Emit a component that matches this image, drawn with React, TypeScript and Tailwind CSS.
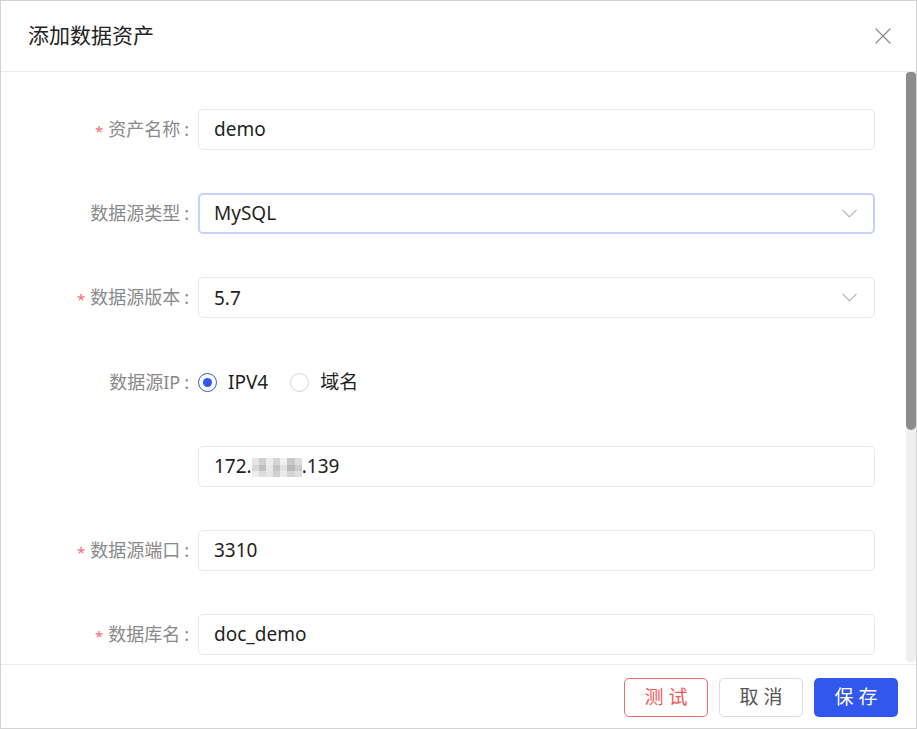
import { ChevronDown, X } from "lucide-react";

const font = "font-['Noto_Sans','Noto_Sans_CJK_SC',sans-serif]";

const mosaic = [
  "bg-[#e4e4e4]", "bg-[#cfcfcf]", "bg-[#ececec]", "bg-[#d6d6d6]", "bg-[#f0f0f0]", "bg-[#c9c9c9]", "bg-[#dedede]",
  "bg-[#d9d9d9]", "bg-[#bfbfbf]", "bg-[#e8e8e8]", "bg-[#c4c4c4]", "bg-[#e2e2e2]", "bg-[#b9b9b9]", "bg-[#cccccc]",
  "bg-[#eeeeee]", "bg-[#dcdcdc]", "bg-[#e6e6e6]", "bg-[#d0d0d0]", "bg-[#ebebeb]", "bg-[#d4d4d4]", "bg-[#e0e0e0]",
];

function Label({ text, required }: { text: string; required?: boolean }) {
  return (
    <div className="w-[189px] shrink-0 flex items-center justify-end text-[18px] text-[#8a8a8a]">
      {required && <span className="text-[#f56c6c] text-[15px] mr-[5px] mt-[3px]">*</span>}
      <span>{text}</span>
      <span className="ml-[4px] mr-[1px]">:</span>
    </div>
  );
}

function Input({ children, focused, select }: { children: React.ReactNode; focused?: boolean; select?: boolean }) {
  return (
    <div
      className={
        "flex-1 h-[41px] ml-[8px] rounded-[5px] flex items-center justify-between text-[19px] text-[#1f1f1f] bg-white " +
        (focused ? "border-2 border-[#c8d1f8] pl-[14px] pr-[10px]" : "border border-[#e6e8f0] pl-[15px] pr-[11px]")
      }
    >
      <div className="flex items-center">{children}</div>
      {select && <ChevronDown size={27} strokeWidth={1} className="text-[#b0b0b0]" />}
    </div>
  );
}

function Radio({ label, checked }: { label: string; checked?: boolean }) {
  return (
    <div className="flex items-center gap-[11px]">
      <span
        className={
          "w-[19px] h-[19px] rounded-full flex items-center justify-center bg-white " +
          (checked ? "border-[1.5px] border-[#3556ee]" : "border border-[#d6d6d6]")
        }
      >
        {checked && <span className="w-[9px] h-[9px] rounded-full bg-[#3556ee]" />}
      </span>
      <span className="text-[19px] text-[#1f1f1f]">{label}</span>
    </div>
  );
}

export default function App() {
  return (
    <div className={`w-[917px] h-[729px] bg-white border border-[#d2d2d2] flex flex-col ${font}`}>
      {/* header */}
      <div className="h-[71px] shrink-0 border-b border-[#e9e9e9] flex items-center justify-between pl-[27px] pr-[19px]">
        <span className="text-[21px] text-[#222]">添加数据资产</span>
        <X size={28} strokeWidth={1.1} className="text-[#8f8f8f]" />
      </div>

      {/* body */}
      <div className="flex-1 min-h-0 flex">
        <div className="flex-1 overflow-hidden pt-[37px] pr-[31px] flex flex-col gap-[43.2px]">
          <div className="flex items-center">
            <Label text="资产名称" required />
            <Input>demo</Input>
          </div>
          <div className="flex items-center">
            <Label text="数据源类型" />
            <Input focused select>MySQL</Input>
          </div>
          <div className="flex items-center">
            <Label text="数据源版本" required />
            <Input select>5.7</Input>
          </div>
          <div className="flex items-center h-[41px]">
            <Label text="数据源IP" />
            <div className="ml-[8px] flex items-center gap-[22px]">
              <Radio label="IPV4" checked />
              <Radio label="域名" />
            </div>
          </div>
          <div className="flex items-center">
            <div className="w-[189px] shrink-0" />
            <Input>
              <span>172.</span>
              <span className="grid grid-cols-7 w-[50px] h-[19px] mt-[3px]">
                {mosaic.map((c, i) => (
                  <span key={i} className={c} />
                ))}
              </span>
              <span>.139</span>
            </Input>
          </div>
          <div className="flex items-center">
            <Label text="数据源端口" required />
            <Input>3310</Input>
          </div>
          <div className="flex items-center">
            <Label text="数据库名" required />
            <Input>doc_demo</Input>
          </div>
        </div>
        {/* scrollbar */}
        <div className="w-[10px] shrink-0 bg-[#efefef] flex flex-col mb-[2px] rounded-b-[4px]">
          <div className="h-[358px] bg-[#8c8c8c] rounded-b-[5px] rounded-t-[4px]" />
        </div>
      </div>

      {/* footer */}
      <div className="h-[64px] shrink-0 border-t border-[#ebebeb] flex items-center justify-end gap-[11px] pr-[18px] pt-[2px]">
        <button className="w-[84px] h-[39px] rounded-[5px] border border-[#f56c6c] text-[#f25858] text-[19px] tracking-[5px] pl-[5px] bg-white">
          测试
        </button>
        <button className="w-[84px] h-[39px] rounded-[5px] border border-[#dcdcdc] text-[#555] text-[19px] tracking-[5px] pl-[5px] bg-white">
          取消
        </button>
        <button className="w-[84px] h-[39px] rounded-[5px] bg-[#3257ee] text-white text-[19px] tracking-[5px] pl-[5px]">
          保存
        </button>
      </div>
    </div>
  );
}
